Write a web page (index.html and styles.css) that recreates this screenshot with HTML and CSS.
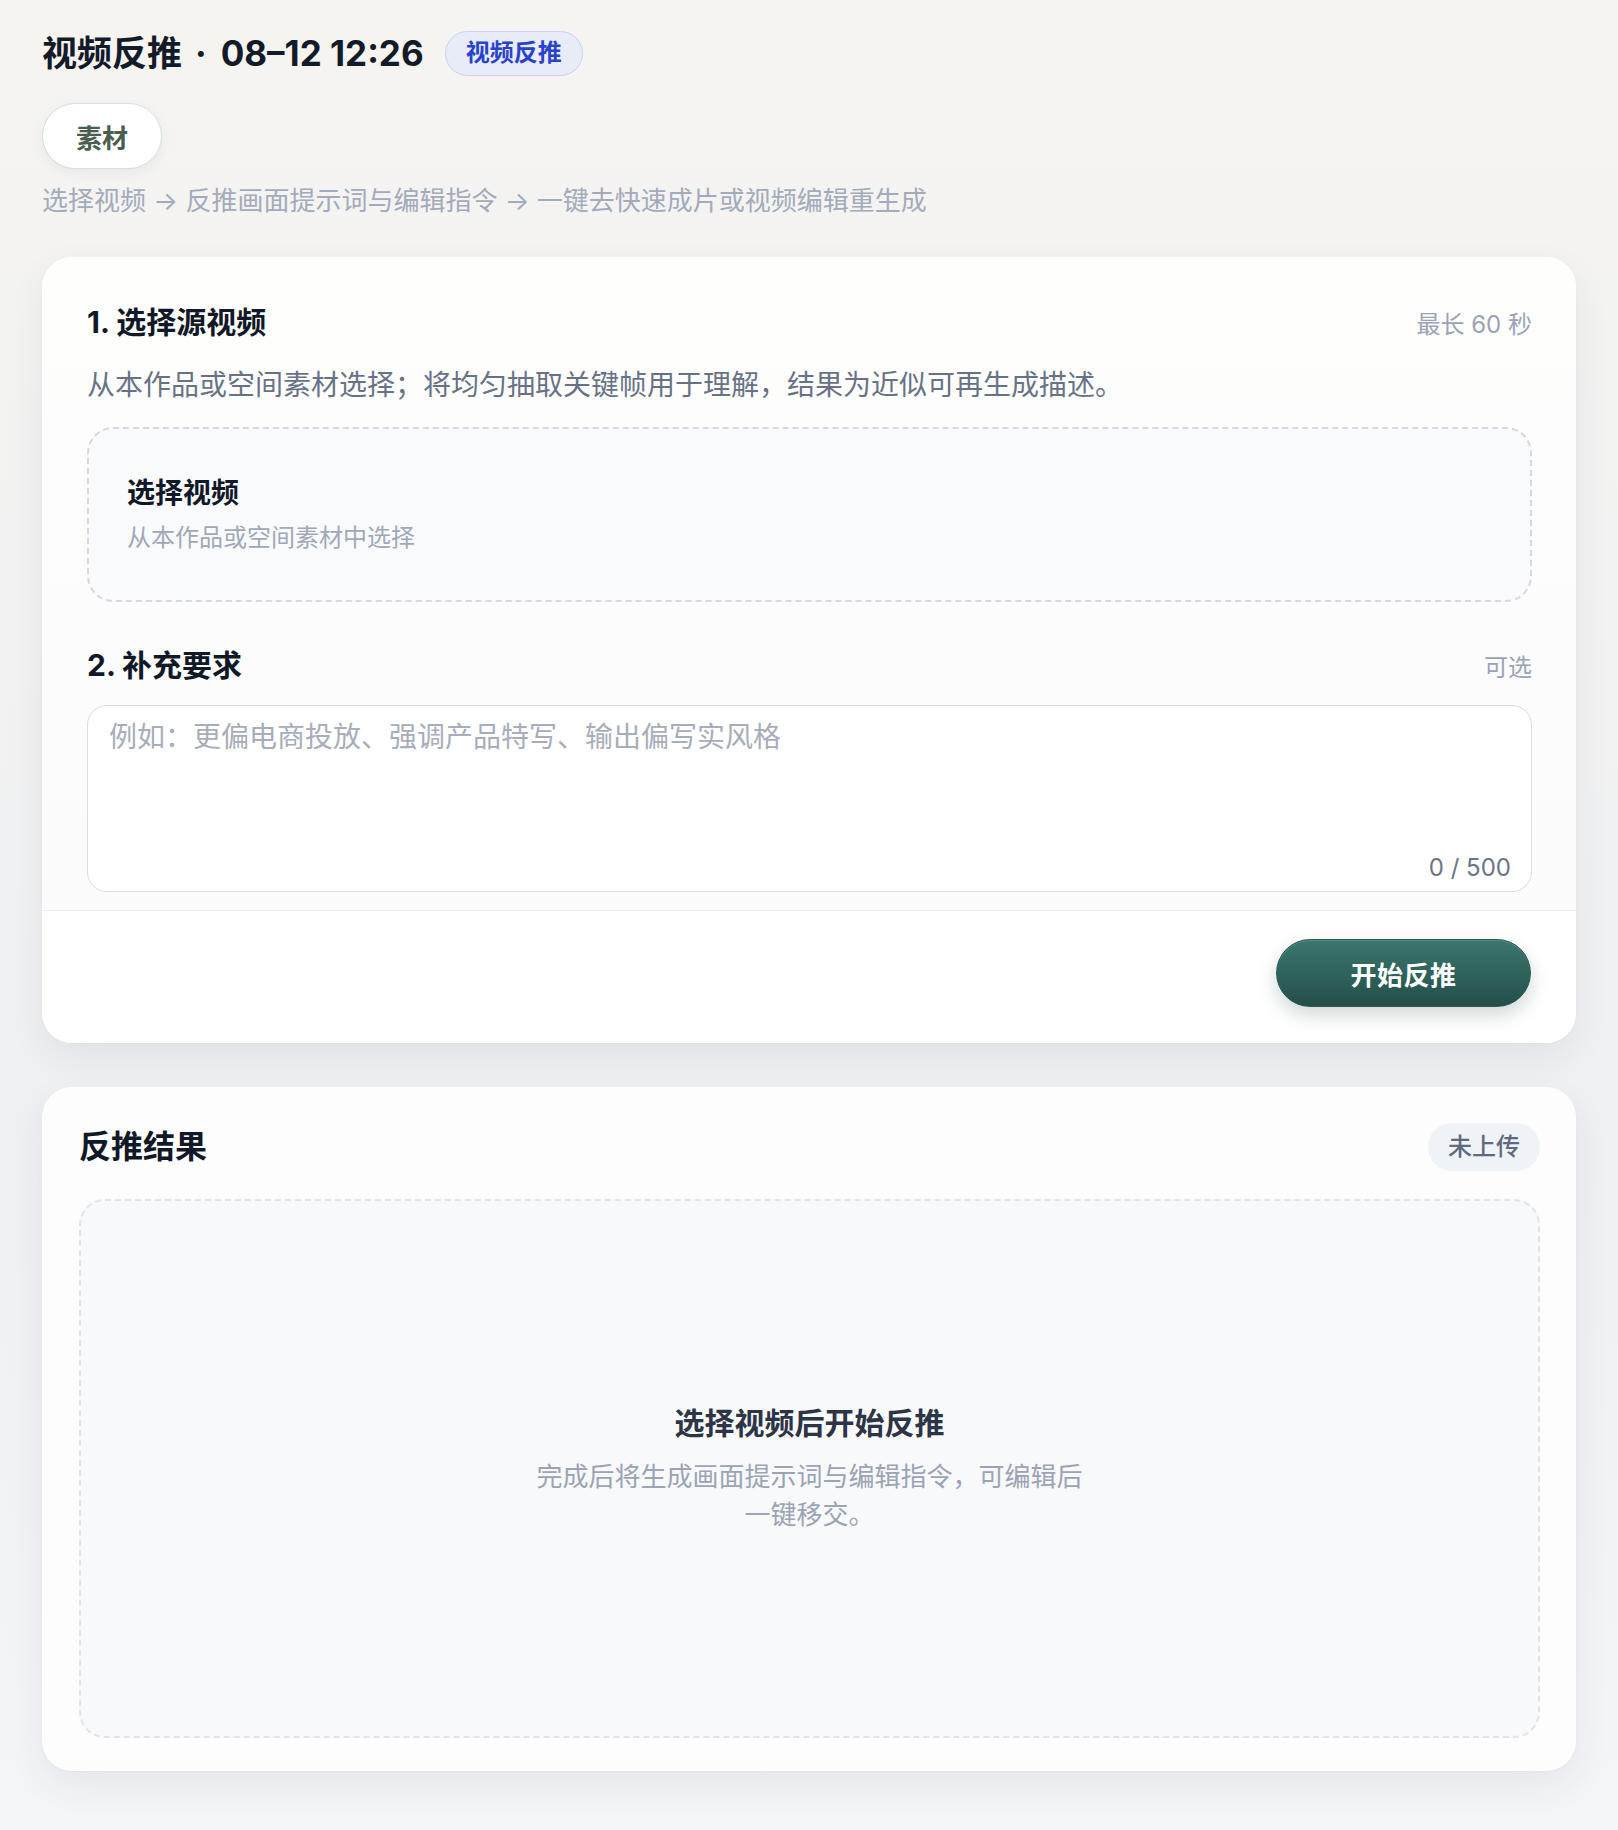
FILE: index.html
```html
<!DOCTYPE html>
<html lang="zh-CN">
<head>
  <meta charset="UTF-8">
  <meta name="viewport" content="width=device-width, initial-scale=1.0">
  <title>视频反推</title>
  <link rel="stylesheet" href="styles.css">
</head>
<body>
  <div class="page">
    <header class="page-head">
      <div class="title-row">
        <h1 class="title">视频反推<span class="dot">·</span>08–12 12:26</h1>
        <span class="tag">视频反推</span>
      </div>
      <button class="chip">素材</button>
      <p class="flow">选择视频 → 反推画面提示词与编辑指令 → 一键去快速成片或视频编辑重生成</p>
    </header>

    <section class="card card-input">
      <div class="card-body">
        <div class="field-head">
          <h2>1. 选择源视频</h2>
          <span class="hint">最长 60 秒</span>
        </div>
        <p class="field-desc">从本作品或空间素材选择；将均匀抽取关键帧用于理解，结果为近似可再生成描述。</p>
        <div class="picker">
          <div class="picker-title">选择视频</div>
          <div class="picker-sub">从本作品或空间素材中选择</div>
        </div>

        <div class="field-head field-head-2">
          <h2>2. 补充要求</h2>
          <span class="hint">可选</span>
        </div>
        <div class="textarea-wrap">
          <textarea placeholder="例如：更偏电商投放、强调产品特写、输出偏写实风格"></textarea>
          <span class="count">0 / 500</span>
        </div>
      </div>
      <div class="card-foot">
        <button class="primary">开始反推</button>
      </div>
    </section>

    <section class="card card-result">
      <div class="result-head">
        <h2>反推结果</h2>
        <span class="status">未上传</span>
      </div>
      <div class="result-empty">
        <div class="empty-title">选择视频后开始反推</div>
        <p class="empty-desc">完成后将生成画面提示词与编辑指令，可编辑后一键移交。</p>
      </div>
    </section>
  </div>
</body>
</html>
```

FILE: styles.css
```css
/* Base */
* {
  box-sizing: border-box;
}
html, body {
  margin: 0;
}
body {
  font-family: "Inter", "Noto Sans CJK SC", sans-serif;
  color: #141a29;
  min-height: 100vh;
  background: linear-gradient(180deg, #f5f4f1 0%, #f2f2f2 35%, #eef0f3 62%, #f4f5f8 100%);
}
h1, h2, p {
  margin: 0;
}
button {
  font-family: inherit;
}

.page {
  padding: 31px 42px 59px 42px;
}

/* Header */
.title-row {
  display: flex;
  align-items: center;
  gap: 21px;
}
.title {
  font-size: 35px;
  line-height: 45px;
  font-weight: 700;
  color: #131a28;
}
.title .dot {
  margin: 0 14px 0 13px;
}
.tag {
  height: 45px;
  padding: 0 20px;
  border: 1.5px solid #c8d1f1;
  border-radius: 23px;
  background: #e8ebf8;
  color: #2843c8;
  font-size: 24px;
  line-height: 42px;
  font-weight: 700;
}
.chip {
  display: block;
  margin-top: 27px;
  width: 120px;
  height: 66px;
  padding: 0;
  border: 1.5px solid #d4e0d9;
  border-radius: 33px;
  background: #fff;
  color: #4b5d51;
  font-size: 26px;
  font-weight: 700;
  box-shadow: 0 4px 12px rgba(40, 60, 50, 0.06);
}
.flow {
  margin-top: 14px;
  margin-bottom: 38px;
  font-size: 26px;
  line-height: 36px;
  color: #a2aabb;
}

/* Cards */
.card {
  background: #fdfdfc;
  border-radius: 30px;
  box-shadow: 0 14px 36px rgba(40, 50, 75, 0.07), 0 1px 3px rgba(0, 0, 0, 0.03);
  overflow: hidden;
}
.card + .card {
  margin-top: 44px;
}
.card-body {
  padding: 45px 44px 18px 45px;
  background: linear-gradient(180deg, #fefefd 0%, #fbfbfc 100%);
}
.field-head {
  display: flex;
  align-items: center;
  justify-content: space-between;
}
.field-head h2 {
  font-size: 30px;
  line-height: 40px;
  font-weight: 700;
  color: #111827;
}
.hint {
  font-size: 24px;
  color: #9aa3b6;
}
.field-desc {
  margin-top: 23px;
  margin-bottom: 22px;
  font-size: 28px;
  line-height: 40px;
  color: #687286;
}
.picker {
  height: 175px;
  border: 2px dashed #d5d8de;
  border-radius: 26px;
  background: #f9fafc;
  padding: 0 38px;
  display: flex;
  flex-direction: column;
  justify-content: center;
  gap: 10px;
}
.picker-title {
  font-size: 28px;
  line-height: 36px;
  font-weight: 700;
  color: #111827;
}
.picker-sub {
  font-size: 24px;
  line-height: 34px;
  color: #a0a8b8;
}
.field-head-2 {
  margin-top: 43px;
}
.textarea-wrap {
  position: relative;
  margin-top: 20px;
}
.textarea-wrap textarea {
  display: block;
  width: 100%;
  height: 187px;
  resize: none;
  border: 1.5px solid #d8dce3;
  border-radius: 20px;
  background: #fff;
  padding: 11px 21px;
  font-family: "Inter", "Noto Sans CJK SC", sans-serif;
  font-size: 28px;
  line-height: 40px;
  color: #111827;
  outline: none;
}
.textarea-wrap textarea::placeholder {
  color: #a7adb9;
}
.count {
  position: absolute;
  right: 21px;
  bottom: 9px;
  font-size: 24px;
  line-height: 30px;
  color: #6b7488;
}
.card-foot {
  border-top: 1px solid #eceef1;
  background: #fff;
  padding: 28px 45px 36px;
  display: flex;
  justify-content: flex-end;
}
.primary {
  width: 255px;
  height: 68px;
  border: 1px solid #2a5a53;
  border-radius: 34px;
  background: linear-gradient(180deg, #3a776e 0%, #244e48 100%);
  color: #fff;
  font-size: 26px;
  font-weight: 700;
  letter-spacing: 0.5px;
  box-shadow: inset 0 1px 0 rgba(255, 255, 255, 0.15), 0 8px 18px rgba(36, 78, 72, 0.22);
}

/* Result card */
.card-result {
  padding: 36px 36px 33px 37px;
  background: #fdfdfd;
}
.result-head {
  display: flex;
  align-items: center;
  justify-content: space-between;
}
.result-head h2 {
  font-size: 32px;
  line-height: 48px;
  font-weight: 700;
  color: #111827;
}
.status {
  height: 48px;
  padding: 0 20px;
  border-radius: 24px;
  background: #eff2f7;
  color: #5e6a7e;
  font-size: 24px;
  line-height: 48px;
  font-weight: 500;
}
.result-empty {
  margin-top: 28px;
  height: 539px;
  border: 2px dashed #e0e3e9;
  border-radius: 26px;
  background: #f8f9fb;
  display: flex;
  flex-direction: column;
  align-items: center;
  justify-content: center;
  text-align: center;
}
.empty-title {
  font-size: 30px;
  line-height: 40px;
  font-weight: 700;
  color: #2d3445;
}
.empty-desc {
  margin-top: 15px;
  max-width: 560px;
  font-size: 26px;
  line-height: 38px;
  color: #9ba3b4;
}
```
